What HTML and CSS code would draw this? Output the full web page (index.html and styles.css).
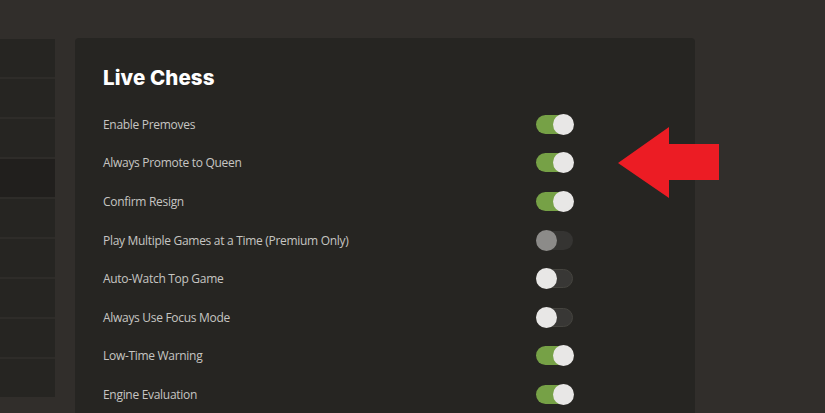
FILE: index.html
```html
<!DOCTYPE html>
<html>
<head>
<meta charset="utf-8">
<link rel="stylesheet" href="styles.css">
</head>
<body>
<div class="page">
  <div class="sidebar">
    <div class="nav-row"></div>
    <div class="nav-row"></div>
    <div class="nav-row"></div>
    <div class="nav-row active"></div>
    <div class="nav-row"></div>
    <div class="nav-row"></div>
    <div class="nav-row"></div>
    <div class="nav-row"></div>
    <div class="nav-row"></div>
  </div>
  <div class="panel">
    <h1 class="title">Live Chess</h1>
    <div class="settings">
      <div class="row"><span class="label">Enable Premoves</span><span class="toggle on"></span></div>
      <div class="row"><span class="label">Always Promote to Queen</span><span class="toggle on"></span></div>
      <div class="row"><span class="label">Confirm Resign</span><span class="toggle on"></span></div>
      <div class="row"><span class="label">Play Multiple Games at a Time (Premium Only)</span><span class="toggle disabled"></span></div>
      <div class="row"><span class="label">Auto-Watch Top Game</span><span class="toggle off"></span></div>
      <div class="row"><span class="label">Always Use Focus Mode</span><span class="toggle off"></span></div>
      <div class="row"><span class="label">Low-Time Warning</span><span class="toggle on"></span></div>
      <div class="row"><span class="label">Engine Evaluation</span><span class="toggle on"></span></div>
    </div>
  </div>
</div>
<svg class="arrow" width="102" height="71" viewBox="0 0 102 71">
  <polygon points="0,36 51,0 51,17 101,17 101,53 51,53 51,71" fill="#ec1c24"/>
</svg>
</body>
</html>
```

FILE: styles.css
```css
html, body {
  margin: 0;
  padding: 0;
  background: #312e2b;
  height: 100%;
  overflow: hidden;
}

.page {
  display: flex;
  align-items: flex-start;
  gap: 20px;
  height: 100vh;
  overflow: hidden;
}

.sidebar {
  width: 55px;
  margin-top: 39px;
  display: flex;
  flex-direction: column;
  gap: 2px;
  background: #2e2c29;
}

.nav-row {
  height: 38px;
  background: #262522;
}

.nav-row.active {
  background: #211f1d;
}

.panel {
  width: 564px;
  margin-top: 38px;
  padding: 28px 28px 0;
  height: 347px;
  background: #262522;
  border-radius: 4px 4px 0 0;
}

.title {
  margin: 0 0 15px;
  height: 24px;
  line-height: 24px;
  font-family: Inter, "Noto Sans", sans-serif;
  font-weight: 800;
  font-size: 20.5px;
  color: #ffffff;
  letter-spacing: 0.1px;
}

.settings {
  display: flex;
  flex-direction: column;
}

.row {
  display: grid;
  grid-template-columns: 433px auto;
  align-items: center;
  height: 38.6px;
}

.label {
  font-family: "Open Sans", "Noto Sans", sans-serif;
  font-size: 12px;
  letter-spacing: -0.3px;
  color: #c6c5c3;
}

.toggle {
  position: relative;
  width: 37px;
  height: 19px;
  border-radius: 10px;
  background: #3b3a38;
  box-sizing: border-box;
}

.toggle::after {
  content: "";
  position: absolute;
  top: -1px;
  width: 21px;
  height: 21px;
  border-radius: 50%;
  background: #e8e7e6;
}

.toggle.on {
  background: #76a146;
}

.toggle.on::after {
  right: -1px;
}

.toggle.off {
  border: 1px solid #45443f;
  background: #383735;
}

.toggle.off::after {
  left: -1px;
  top: -2px;
}

.toggle.disabled {
  background: #353432;
}

.toggle.disabled::after {
  left: 0;
  background: #8c8b89;
}

.arrow {
  position: absolute;
  left: 618px;
  top: 127px;
}
```
